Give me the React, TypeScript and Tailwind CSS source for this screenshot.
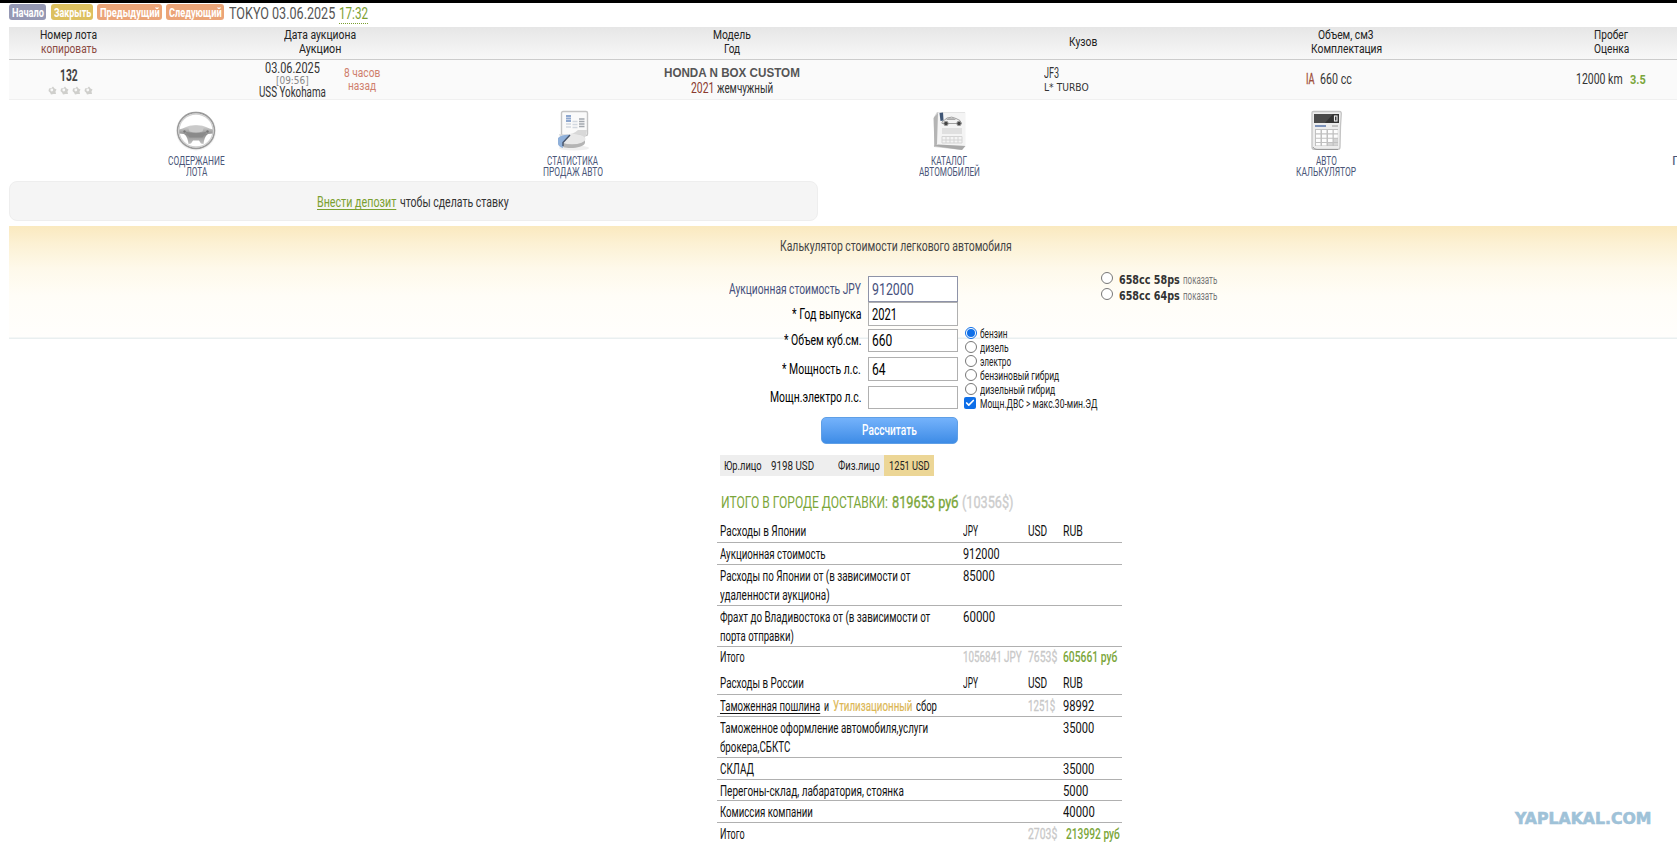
import React, { useLayoutEffect, useRef, useState } from 'react';
import { Check } from 'lucide-react';

interface FitProps {
  w: number;
  className?: string;
  inner?: string;
  children: React.ReactNode;
}

// Condensed lettering: squeezes a line of text to the given width
const Fit: React.FC<FitProps> = ({ w, className = '', inner = '', children }) => {
  const ref = useRef<HTMLSpanElement>(null);
  const [scale, setScale] = useState(1);

  useLayoutEffect(() => {
    if (ref.current && ref.current.offsetWidth) setScale(w / ref.current.offsetWidth);
  }, [w]);

  return (
    <span className={`inline-block shrink-0 align-top text-left whitespace-nowrap ${className}`} style={{ width: w }}>
      <span ref={ref} className={`inline-block origin-left align-top ${inner}`} style={{ transform: `scaleX(${scale})` }}>
        {children}
      </span>
    </span>
  );
};

const navButtons = [
  { label: 'Начало', w: 32, className: 'w-[37px] bg-[#9598b4]' },
  { label: 'Закрыть', w: 37, className: 'ml-[5px] w-[42px] bg-[#ddc05f]' },
  { label: 'Предыдущий', w: 60, className: 'ml-1 w-[65px] bg-[#eba477]' },
  { label: 'Следующий', w: 53, className: 'ml-1 w-[58px] bg-[#eba477]' },
];

const columns = [
  [{ label: 'Номер лота', w: 57 }, { label: 'копировать', w: 56, className: 'text-[#8b4a42]' }],
  [{ label: 'Дата аукциона', w: 72 }, { label: 'Аукцион', w: 42 }],
  [{ label: 'Модель', w: 38 }, { label: 'Год', w: 16 }],
  [{ label: 'Кузов', w: 28 }],
  [{ label: 'Объем, см3', w: 56 }, { label: 'Комплектация', w: 71 }],
  [{ label: 'Пробег', w: 34 }, { label: 'Оценка', w: 35 }],
];

const WheelIcon = () => (
  <svg width="42" height="42" viewBox="0 0 42 42">
    <defs>
      <linearGradient id="hub" x1="0" y1="0" x2="0" y2="1">
        <stop offset="0" stopColor="#dcdcdc" />
        <stop offset="0.5" stopColor="#8f8f8f" />
        <stop offset="1" stopColor="#c2c2c2" />
      </linearGradient>
    </defs>
    <ellipse cx="21" cy="21" rx="20" ry="19.600" fill="#f0f0f0" />
    <ellipse cx="21" cy="20.500" rx="18.400" ry="17.900" fill="#fff" stroke="#9a9a9a" strokeWidth="1.600" />
    <ellipse cx="21" cy="20.500" rx="17" ry="16.400" fill="none" stroke="#d0d0d0" strokeWidth="1.200" />
    <path d="M4 19.500C9 18.500 12 15 21 15S33 18.500 38 19.500L37.600 23.500L33 24C30 26 29 30 28.500 34L26 33.500L24 30.500H18L16 33.500L13.500 34C13 30 12 26 9 24L4.400 23.500Z" fill="url(#hub)" />
    <path d="M13 17Q21 14 29 17L27.500 21.500Q21 23.500 14.500 21.500Z" fill="#cacaca" />
    <path d="M10 21.500Q21 25 32 21.500L27.500 27.500H14.500Z" fill="#8a8a8a" />
    <circle cx="9.500" cy="21.500" r="1.200" fill="#777" />
    <circle cx="32.500" cy="21.500" r="1.200" fill="#777" />
  </svg>
);

const StatsIcon = () => (
  <svg width="42" height="42" viewBox="0 0 42 42">
    <ellipse cx="22" cy="38" rx="15" ry="2.500" fill="#efefef" />
    <rect x="9.500" y="1.500" width="26" height="24" rx="1.500" fill="#fafafa" stroke="#c4c4c4" strokeWidth="1.400" />
    <path d="M14 6h5M14 8.500h5M14 11h5" stroke="#8fa8cf" strokeWidth="1.800" />
    <path d="M14 14h5M14 17h5M20.500 11.500h5M20.500 14.500h5M20.500 17.500h5" stroke="#d2d8e0" strokeWidth="1.600" />
    <path d="M27 9h5.500M27 11.500h5.500M27 14h5.500M27 16.500h5.500" stroke="#a3a8ae" strokeWidth="1.600" />
    <path d="M7 24Q20 26 26 20H35L34 26L29 30L10 32Z" fill="#d8d8d8" />
    <path d="M6 29C9 24 30 22 33 28V33C31 39 10 40 6 34Z" fill="#b4b4b4" />
    <ellipse cx="20" cy="29" rx="13.500" ry="5.200" fill="#e8e8e8" />
    <path d="M18 25L11 32.500V38C8 37 6 36 6 33V28C9 25 14 24.500 18 25Z" fill="#8fb0da" />
    <path d="M18 25L11 32.500V36" stroke="#44536b" strokeWidth="1.400" fill="none" />
  </svg>
);

const CatalogIcon = () => (
  <svg width="42" height="42" viewBox="0 0 42 42">
    <path d="M6 7L9 2H37V35L34 40L6 37Z" fill="#d5d5d5" />
    <path d="M5.500 8L10 3V33L6.500 37Z" fill="#b4b4b4" />
    <path d="M10 2.500H37.500V36L9 35Z" fill="#f4f4f4" />
    <path d="M5.500 36L10 34.500L37.500 36L34 40Z" fill="#a9a9a9" />
    <path d="M14 12Q16 10.500 19 8Q24 6 28 8.500L32 10.500L33.500 13.500H14Z" fill="#f3f3f3" stroke="#8a8a8a" strokeWidth="0.800" />
    <path d="M18 10L20 8.200H26L28 10Z" fill="#aaa" />
    <circle cx="18" cy="13.500" r="2.200" fill="#444" stroke="#999" />
    <circle cx="31" cy="13.500" r="2.200" fill="#444" stroke="#999" />
    <path d="M11.500 3L15 2.500L15.500 10.500L12.500 11Z" fill="#3f5575" />
    <rect x="14" y="18" width="20" height="6" fill="#e0e0e0" />
    <path d="M14 26.500h20M14 30h20M14 33h20M14 26.500v6.500M18 26.500v6.500M22 26.500v6.500M26 26.500v6.500M30 26.500v6.500M34 26.500v6.500" stroke="#d4d4d4" strokeWidth="1" />
  </svg>
);

const CalcIcon = () => (
  <svg width="42" height="42" viewBox="0 0 42 42">
    <path d="M7 2.500Q7 1.500 8.500 1.500H34.500Q36.500 1.500 36.300 4L35.500 16L35 37Q35 39.300 33 39.300H9Q7 39.300 7 37Z" fill="#ededed" stroke="#c4c4c4" strokeWidth="1.300" />
    <path d="M8 37Q9 39.500 12 39.500H33" stroke="#999" fill="none" />
    <rect x="9" y="4" width="25" height="9" fill="#333" />
    <path d="M9 4H28L20 13H9Z" fill="#4b4b4b" />
    <rect x="29.500" y="6" width="2.500" height="5" fill="none" stroke="#eee" strokeWidth="1.100" />
    <path d="M10 16h11" stroke="#5673a8" strokeWidth="1.500" />
    <path d="M27 16h6" stroke="#aaa" strokeWidth="1.300" />
    <path d="M10 19h23v17H10z" fill="#c0c0c0" />
    <path d="M11 20h4.500v3.200H11zM17 20h4.500v3.200H17zM23 20h4.500v3.200H23zM28.800 20h4v3.200h-4zM11 24.500h4.500v3.200H11zM17 24.500h4.500v3.200H17zM23 24.500h4.500v3.200H23zM28.800 24.500h4v3.200h-4zM11 28.800h4.500V32H11zM17 28.800h4.500V32H17zM23 28.800h4.500V32H23zM11 33h4.500v2.500H11zM17 33h4.500v2.500H17z" fill="#fdfdfd" />
    <path d="M28.800 28.800h4V32h-4zM23 33h4.500v2.500H23zM28.800 33h4v2.500h-4z" fill="#d5d5d5" />
  </svg>
);

const menu = [
  { icon: <WheelIcon />, lines: [{ label: 'СОДЕРЖАНИЕ', w: 56.5 }, { label: 'ЛОТА', w: 21 }] },
  { icon: <StatsIcon />, lines: [{ label: 'СТАТИСТИКА', w: 51 }, { label: 'ПРОДАЖ АВТО', w: 60 }] },
  { icon: <CatalogIcon />, lines: [{ label: 'КАТАЛОГ', w: 36 }, { label: 'АВТОМОБИЛЕЙ', w: 61 }] },
  { icon: <CalcIcon />, lines: [{ label: 'АВТО', w: 21 }, { label: 'КАЛЬКУЛЯТОР', w: 60 }] },
  { icon: null, lines: [{ label: 'ПЕРЕВОД', w: 61 }] },
];

const fields = [
  { label: 'Аукционная стоимость JPY', w: 132, value: '912000', vw: 41.5, row: 'h-[26px] mb-0 text-[#46507c]', box: 'h-[26px] border-[#8e93a8]' },
  { label: '* Год выпуска', w: 69.5, value: '2021', vw: 25, row: 'h-6 mb-[3px] text-black', box: 'h-6 border-[#b0b0b0]' },
  { label: '* Объем куб.см.', w: 77.5, value: '660', vw: 20.5, row: 'h-[23px] mb-[5px] text-black', box: 'h-[23px] border-[#b0b0b0]' },
  { label: '* Мощность л.с.', w: 79, value: '64', vw: 13.5, row: 'h-6 mb-[5px] text-black', box: 'h-6 border-[#b0b0b0]' },
  { label: 'Мощн.электро л.с.', w: 91.5, value: '', vw: 0, row: 'h-[23px] mb-[8px] text-black', box: 'h-[23px] border-[#b0b0b0]' },
];

const engines = [
  { label: 'бензин', w: 27.5 },
  { label: 'дизель', w: 28.5 },
  { label: 'электро', w: 31.5 },
  { label: 'бензиновый гибрид', w: 79 },
  { label: 'дизельный гибрид', w: 75.5 },
];

const Radio: React.FC<{ checked?: boolean }> = ({ checked }) => (
  <span className={`flex h-3 w-3 shrink-0 items-center justify-center rounded-full border bg-white ${checked ? 'border-[#0f6fe8]' : 'border-[#777]'}`}>
    {checked && <span className="h-2 w-2 rounded-full bg-[#0f6fe8]" />}
  </span>
);

interface RowProps {
  name: React.ReactNode;
  jpy?: React.ReactNode;
  usd?: React.ReactNode;
  rub?: React.ReactNode;
  className: string;
}

const Row: React.FC<RowProps> = ({ name, jpy, usd, rub, className }) => (
  <div className={`grid grid-cols-[242.5px_65px_35px_60px] border-[#b0b0b0] pl-[3px] text-[14px] leading-[19px] text-[#111] ${className}`}>
    <div className="flex flex-col">{name}</div>
    <div>{jpy}</div>
    <div>{usd}</div>
    <div>{rub}</div>
  </div>
);

const Head: React.FC<{ title: string; w: number; className?: string }> = ({ title, w, className = '' }) => (
  <Row
    name={<Fit w={w}>{title}</Fit>}
    jpy={<Fit w={15}>JPY</Fit>}
    usd={<Fit w={19.5}>USD</Fit>}
    rub={<Fit w={19.5}>RUB</Fit>}
    className={`h-[21px] border-b ${className}`}
  />
);

export default function App() {
  return (
    <div className="h-[849px] w-[1677px] overflow-hidden bg-white font-[Roboto,sans-serif] text-[#222]">
      <div className="h-[3px] bg-black" />

      <div className="flex h-6 items-start pl-[9px] pt-px">
        {navButtons.map(b => (
          <div key={b.label} className={`flex h-4 items-center justify-center rounded-[3px] text-[13px] leading-4 font-bold text-white ${b.className}`}>
            <Fit w={b.w} className="pt-px">{b.label}</Fit>
          </div>
        ))}
        <Fit w={106} className="ml-[5px] text-[16.5px] leading-[19px] text-[#555]">TOKYO 03.06.2025</Fit>
        <Fit w={29} className="ml-1 h-5 border-b border-dotted border-[#7ba030] text-[16.5px] leading-[19px] text-[#7ba030]">17:32</Fit>
      </div>

      <div className="ml-[9px] grid h-[33px] w-[1735px] grid-cols-[119px_384px_440px_262px_264px_266px] items-center border-b border-[#ccc] bg-linear-to-b from-[#e6e6e6] to-[#f8f8f8] pb-[2px] text-[12.5px] leading-[14px]">
        {columns.map((lines, i) => (
          <div key={i} className="flex flex-col items-center">
            {lines.map(l => (
              <Fit key={l.label} w={l.w} className={'className' in l ? l.className : ''}>{l.label}</Fit>
            ))}
          </div>
        ))}
      </div>

      <div className="ml-[9px] grid h-[40px] w-[1735px] grid-cols-[119px_384px_440px_262px_264px_266px] border-b border-[#f0f0f0] bg-[#fafafa] text-[14px] text-[#333]">
        <div className="flex flex-col items-center pt-[7px]">
          <Fit w={18} className="text-[16px] leading-[18px] font-bold text-[#444]">132</Fit>
          <div className="mt-px flex gap-[3px] pl-[3px]">
            {[0, 1, 2, 3].map(i => (
              <svg key={i} width="9" height="9" viewBox="0 0 9 9">
                <path d="M1 2.500L3.500 2L5 0.500L6.500 2.500L8.500 3.500L7.500 5.500L8 8L5.500 8L3 8.500L2 6.500L0.500 5Z" fill="#cfcfcc" />
                <circle cx="3.800" cy="4" r="1.400" fill="#f8f8f8" />
              </svg>
            ))}
          </div>
        </div>
        <div className="flex pl-[131px]">
          <div className="flex w-[67px] flex-col items-center pt-[2px]">
            <Fit w={55} className="text-[14.5px] leading-[13px]">03.06.2025</Fit>
            <Fit w={33} className="font-['DejaVu_Sans',sans-serif] text-[10px] leading-[11px] text-[#888]">[09:56]</Fit>
            <Fit w={67} className="text-[14.5px] leading-[14px]">USS Yokohama</Fit>
          </div>
          <div className="ml-[18px] flex flex-col items-center pt-[6px] text-[13px] leading-[13px] text-[#cf7f6d]">
            <Fit w={36}>8 часов</Fit>
            <Fit w={28}>назад</Fit>
          </div>
        </div>
        <div className="flex flex-col items-center pt-[5px]">
          <Fit w={136} className="font-['Liberation_Sans',sans-serif] text-[12.5px] leading-4 font-bold text-[#555]">HONDA N BOX CUSTOM</Fit>
          <div className="flex gap-[3px] leading-[15px]">
            <Fit w={23} className="text-[#8a3a30]">2021</Fit>
            <Fit w={56}>жемчужный</Fit>
          </div>
        </div>
        <div className="flex flex-col pl-[92px] pt-[6px]">
          <Fit w={15} className="text-[14.5px] leading-4">JF3</Fit>
          <Fit w={45} className="font-['DejaVu_Sans',sans-serif] text-[10px] leading-[12px]">L* TURBO</Fit>
        </div>
        <div className="flex gap-[6px] pl-[91.5px] leading-[39px]">
          <Fit w={8.5} inner="[-webkit-text-stroke:0.3px]" className="text-[#a0503c]">IA</Fit>
          <Fit w={32}>660 cc</Fit>
        </div>
        <div className="flex gap-[7px] pl-[98px] leading-[39px]">
          <Fit w={46.5}>12000 km</Fit>
          <Fit w={16} className="text-[13px] font-bold text-[#7aa63c]">3.5</Fit>
        </div>
      </div>

      <div className="ml-2 grid h-[81px] w-[1883px] grid-cols-5 pt-[10px]">
        {menu.map((m, i) => (
          <div key={i} className="flex flex-col items-center text-[12.5px] leading-[11px] text-[#4a5678]">
            <div className="mb-[3px] h-[42px]">{m.icon}</div>
            {m.lines.map(l => (
              <Fit key={l.label} w={l.w}>{l.label}</Fit>
            ))}
          </div>
        ))}
      </div>

      <div className="ml-[9px] flex h-[40px] w-[809px] gap-1 rounded-lg border border-[#eee] bg-[#f5f5f5] pl-[307px] text-[14.5px] leading-[41px] text-[#333]">
        <Fit w={79} inner="underline underline-offset-2" className="text-[#7ba030]">Внести депозит</Fit>
        <Fit w={109}>чтобы сделать ставку</Fit>
      </div>

      <div className="mt-[5px] ml-[9px] w-[1773px] bg-[linear-gradient(to_bottom,#fae9bf_0,#fcf1d4_18px,#fef9ea_42px,#fffdf7_70px,#fffefc_111px,#e9eff0_112px)] bg-[length:100%_113px] bg-no-repeat">
        <div className="h-[50px] text-center text-[15px] leading-[41px] text-[#444]">
          <Fit w={232}>Калькулятор стоимости легкового автомобиля</Fit>
        </div>

        <div className="flex pl-[708px]">
          <div className="flex w-[241px] flex-col">
            {fields.map(f => (
              <div key={f.label} className={`flex items-center justify-end gap-[7px] text-[15.5px] ${f.row}`}>
                <Fit w={f.w} className="pt-px">{f.label}</Fit>
                <div className={`flex w-[90px] items-center border bg-white pl-[3px] text-[17px] ${f.box}`}>
                  {f.value && <Fit w={f.vw} className="pt-px">{f.value}</Fit>}
                </div>
              </div>
            ))}
            <button className="flex h-[27px] w-[137px] items-center justify-center self-end rounded-[5px] border border-[#5f9fe6] bg-linear-to-b from-[#74b2fb] to-[#3d8ce6] text-[15.5px] font-medium text-white">
              <Fit w={55}>Рассчитать</Fit>
            </button>
          </div>

          <div className="ml-[7px] w-[136px] pt-[50px] text-[12px] text-[#222]">
            {engines.map((e, i) => (
              <div key={e.label} className="flex h-[14px] items-center gap-[2.5px]">
                <Radio checked={i === 0} />
                <Fit w={e.w} className="pt-px leading-[16px]">{e.label}</Fit>
              </div>
            ))}
            <div className="flex h-[14px] items-center gap-[3.5px]">
              <span className="-ml-px flex h-3 w-3 shrink-0 items-center justify-center rounded-[2px] bg-[#0f6fe8]">
                <Check size={10} strokeWidth={4} color="#fff" />
              </span>
              <Fit w={117.5} className="pt-px leading-[16px]">Мощн.ДВС &gt; макс.30-мин.ЭД</Fit>
            </div>
          </div>

          <div className="-mt-1 text-[#333]">
            {['658cc 58ps', '658cc 64ps'].map(v => (
              <div key={v} className="flex h-4 items-start">
                <Radio />
                <Fit w={61} className="ml-[5.5px] font-['DejaVu_Sans',sans-serif] text-[11.5px] leading-[16px] font-bold">{v}</Fit>
                <Fit w={34.5} className="ml-[3px] text-[12px] leading-[16px] text-[#777]">показать</Fit>
              </div>
            ))}
          </div>
        </div>
      </div>

      <div className="ml-[717px] w-[405px]">
        <div className="mt-[11px] ml-[3px] flex h-[21px] w-[214px] bg-[#eee] pl-1 text-[13px] leading-[22px] text-[#222]">
          <Fit w={38}>Юр.лицо</Fit>
          <Fit w={43} className="ml-[9px]">9198 USD</Fit>
          <Fit w={42} className="ml-6">Физ.лицо</Fit>
          <div className="ml-1 w-[50px] bg-[#ecd696] pl-[5px]">
            <Fit w={40.5}>1251 USD</Fit>
          </div>
        </div>

        <div className="mt-[10px] ml-1 flex h-8 text-[16.5px] leading-[33px] text-[#7ba63a]">
          <Fit w={167}>ИТОГО В ГОРОДЕ ДОСТАВКИ:</Fit>
          <Fit w={66.5} inner="[-webkit-text-stroke:0.35px]" className="ml-[3.5px]">819653 руб</Fit>
          <Fit w={51.5} inner="[-webkit-text-stroke:0.35px]" className="ml-1 text-[#ccc]">(10356$)</Fit>
        </div>

        <Head title="Расходы в Японии" w={86} className="mt-1" />
        <Row name={<Fit w={105.5}>Аукционная стоимость</Fit>} jpy={<Fit w={36.5}>912000</Fit>} className="h-[22px] border-b pt-[2px]" />
        <Row
          name={<><Fit w={190.5}>Расходы по Японии от (в зависимости от</Fit><Fit w={109.5}>удаленности аукциона)</Fit></>}
          jpy={<Fit w={31.5}>85000</Fit>}
          className="h-[41px] border-b pt-[2px]"
        />
        <Row
          name={<><Fit w={210.5}>Фрахт до Владивостока от (в зависимости от</Fit><Fit w={74}>порта отправки)</Fit></>}
          jpy={<Fit w={32}>60000</Fit>}
          className="h-[41px] border-b pt-[2px]"
        />
        <Row
          name={<Fit w={24.5}>Итого</Fit>}
          jpy={<Fit w={59} inner="[-webkit-text-stroke:0.3px]" className="text-[#c8c8c8]">1056841 JPY</Fit>}
          usd={<Fit w={29} inner="[-webkit-text-stroke:0.3px]" className="text-[#c8c8c8]">7653$</Fit>}
          rub={<Fit w={54.5} className="font-medium text-[#7ba63a]">605661 руб</Fit>}
          className="h-[21px] pt-px"
        />

        <Head title="Расходы в России" w={84} className="mt-[6px]" />
        <Row
          name={
            <div className="flex gap-[3.5px]">
              <Fit w={100.5} inner="underline underline-offset-2">Таможенная пошлина</Fit>
              <Fit w={5}>и</Fit>
              <Fit w={79.5} inner="[-webkit-text-stroke:0.2px]" className="text-[#dcb755]">Утилизационный</Fit>
              <Fit w={21}>сбор</Fit>
            </div>
          }
          usd={<Fit w={27} inner="[-webkit-text-stroke:0.3px]" className="text-[#c8c8c8]">1251$</Fit>}
          rub={<Fit w={31}>98992</Fit>}
          className="h-[22px] border-b pt-[2px]"
        />
        <Row
          name={<><Fit w={208.5}>Таможенное оформление автомобиля,услуги</Fit><Fit w={70.5}>брокера,СБКТС</Fit></>}
          rub={<Fit w={31}>35000</Fit>}
          className="h-[41px] border-b pt-[2px]"
        />
        <Row name={<Fit w={34}>СКЛАД</Fit>} rub={<Fit w={31}>35000</Fit>} className="h-[22px] border-b pt-[2px]" />
        <Row name={<Fit w={184}>Перегоны-склад, лабаратория, стоянка</Fit>} rub={<Fit w={25}>5000</Fit>} className="h-[21px] border-b pt-[2px]" />
        <Row name={<Fit w={93}>Комиссия компании</Fit>} rub={<Fit w={31.5}>40000</Fit>} className="h-[22px] border-b pt-[2px]" />
        <Row
          name={<Fit w={24.5}>Итого</Fit>}
          usd={<Fit w={29} inner="[-webkit-text-stroke:0.3px]" className="text-[#c8c8c8]">2703$</Fit>}
          rub={<Fit w={54} className="ml-[3px] font-medium text-[#7ba63a]">213992 руб</Fit>}
          className="h-[22px] pt-[2px]"
        />
      </div>

      {/* watermark sits over the page */}
      <div className="absolute top-[809px] left-[1515px] font-['DejaVu_Sans',sans-serif] text-[15px] leading-5 font-bold text-[#9fc2d8]">
        <Fit w={136} inner="[-webkit-text-stroke:0.6px]">YAPLAKAL.COM</Fit>
      </div>
    </div>
  );
}
